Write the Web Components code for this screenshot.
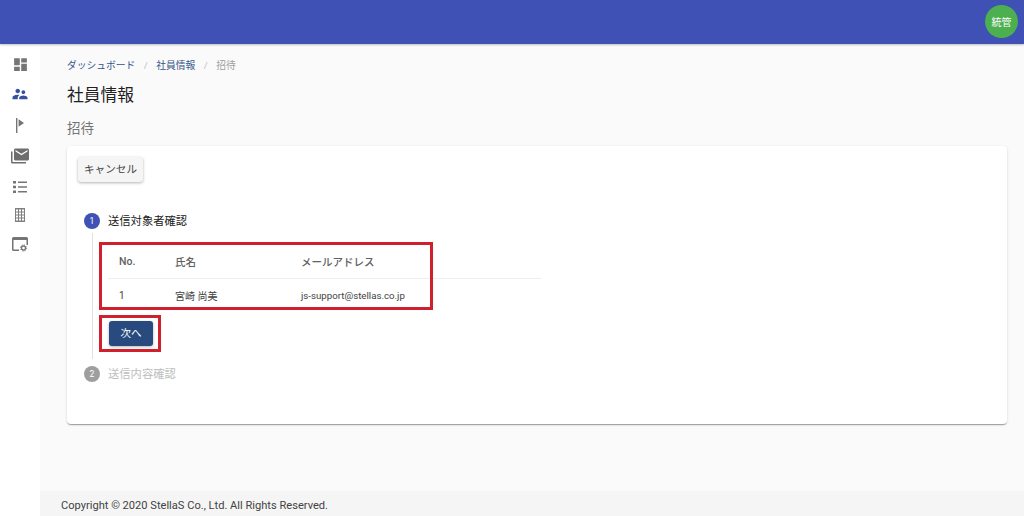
<!DOCTYPE html>
<html lang="ja">
<head>
<meta charset="utf-8">
<title>社員情報</title>
<style>
  html, body { margin: 0; height: 100%; }
  body { font-family: Roboto, "Noto Sans CJK JP", sans-serif; background: #fafafa; }
</style>
</head>
<body>
<app-shell>
  <top-bar slot="top" initials="統管"></top-bar>
  <side-nav slot="side"></side-nav>
  <bread-crumbs>
    <a>ダッシュボード</a>
    <a>社員情報</a>
    <span>招待</span>
  </bread-crumbs>
  <page-head title-text="社員情報" sub="招待"></page-head>
  <invite-card>
    <plain-button>キャンセル</plain-button>
    <step-item num="1" label="送信対象者確認" active>
      <mark-box>
        <staff-table></staff-table>
      </mark-box>
      <mark-box tight>
        <next-button>次へ</next-button>
      </mark-box>
    </step-item>
    <step-item num="2" label="送信内容確認"></step-item>
  </invite-card>
  <page-foot slot="foot">Copyright © 2020 StellaS Co., Ltd. All Rights Reserved.</page-foot>
</app-shell>

<script>
class AppShell extends HTMLElement {
  constructor() {
    super();
    this.attachShadow({mode: 'open'}).innerHTML = `
      <style>
        :host { display: grid; grid-template-columns: 40px 1fr; grid-template-rows: 44px 1fr 25px; height: 516px; overflow: hidden; }
        .top { grid-column: 1 / 3; }
        .side { grid-row: 2 / 4; background: #fff; }
        .main { padding: 0 17px 0 27px; min-width: 0; }
      </style>
      <div class="top"><slot name="top"></slot></div>
      <div class="side"><slot name="side"></slot></div>
      <div class="main"><slot></slot></div>
      <div><slot name="foot"></slot></div>`;
  }
}
customElements.define('app-shell', AppShell);

class TopBar extends HTMLElement {
  constructor() {
    super();
    this.attachShadow({mode: 'open'}).innerHTML = `
      <style>
        :host { display: flex; height: 44px; box-sizing: border-box; background: #3f51b5; justify-content: flex-end; align-items: center; padding: 0 6px 1px 0; box-shadow: 0 1px 2px rgba(0,0,0,.25); position: relative; z-index: 2; }
        .av { width: 33px; height: 33px; border-radius: 50%; background: #4caf50; color: #fff; font-size: 10px; display: flex; align-items: center; justify-content: center; }
      </style>
      <div class="av">${this.getAttribute('initials')}</div>`;
  }
}
customElements.define('top-bar', TopBar);

// sidebar icons, drawn in px so they land on the same pixels as the reference
const NAV_ICONS = [
  {h: 30, svg: '<svg viewBox="0 0 24 24" width="17" height="17" fill="#757575"><path d="M3 13h8V3H3v10zm0 8h8v-6H3v6zm10 0h8V11h-8v10zm0-18v6h8V3h-8z"/></svg>'},
  {h: 30, svg: '<svg viewBox="0 0 24 24" width="18" height="18" fill="#34509f"><path d="M16.5 12c1.38 0 2.49-1.12 2.49-2.5S17.88 7 16.5 7 14 8.12 14 9.5s1.12 2.5 2.5 2.5zM9 11c1.66 0 2.99-1.34 2.99-3S10.66 5 9 5 6 6.34 6 8s1.34 3 3 3zm7.5 3c-1.83 0-5.5.92-5.5 2.75V19h11v-2.25c0-1.83-3.67-2.75-5.5-2.75zM9 13c-2.33 0-7 1.17-7 3.5V19h7v-2.25c0-.85.33-2.34 2.37-3.47C10.5 13.1 9.66 13 9 13z"/></svg>'},
  {h: 32, svg: '<svg viewBox="0 0 8 15" width="8" height="15" fill="#757575"><path d="M0 0h1.4v15H0zM2.6 1.2L8 5 2.6 8.8z"/></svg>'},
  {h: 30, svg: '<svg viewBox="0 0 24 24" width="18" height="18" fill="#6e6e6e"><path d="M2 6H0v5h.01L0 20c0 1.1.9 2 2 2h18v-2H2V6zm20-4H6c-1.1 0-2 .9-2 2v12c0 1.1.9 2 2 2h16c1.1 0 2-.9 2-2V4c0-1.1-.9-2-2-2zm0 4l-8 5-8-5V4l8 5 8-5v2z"/></svg>'},
  {h: 32, svg: '<svg viewBox="0 0 14 12" width="14" height="12" fill="#757575"><path d="M0 0h3v2.4H0zM0 4.8h3v2.4H0zM0 9.6h3V12H0zM5 .5h9V2H5zM5 5.3h9v1.5H5zM5 10h9v1.5H5z"/></svg>'},
  {h: 24, svg: '<svg viewBox="0 0 10 14" width="10" height="14" fill="#808080"><path fill-rule="evenodd" d="M0 0h10v14H0zM1 1.5v2h2v-2zM4 1.5v2h2v-2zM7 1.5v2h2v-2zM1 4.5v2h2v-2zM4 4.5v2h2v-2zM7 4.5v2h2v-2zM1 7.5v2h2v-2zM4 7.5v2h2v-2zM7 7.5v2h2v-2zM1 10.5v2h2v-2zM4 10.5v2h2v-2zM7 10.5v2h2v-2z"/></svg>'},
  {h: 35, svg: '<svg viewBox="0 0 16 15" width="16" height="15" fill="#757575"><path d="M1.5 0h13A1.5 1.5 0 0 1 16 1.5V8h-1.500V3h-13v9.500H7V14H1.500A1.500 1.500 0 0 1 0 12.500v-11A1.500 1.500 0 0 1 1.500 0z"/><circle cx="11.500" cy="11" r="2" fill="none" stroke="#757575" stroke-width="1.300"/><circle cx="11.500" cy="11" r="3.100" fill="none" stroke="#757575" stroke-width="1" stroke-dasharray="1.200 1.230"/></svg>'}
];

class SideNav extends HTMLElement {
  constructor() {
    super();
    let html = '';
    for (var i = 0; i < NAV_ICONS.length; i++) {
      html += `<div class="it" style="height:${NAV_ICONS[i].h}px">${NAV_ICONS[i].svg}</div>`;
    }
    this.attachShadow({mode: 'open'}).innerHTML = `
      <style>
        :host { display: flex; flex-direction: column; padding-top: 5px; }
        .it { display: flex; align-items: center; justify-content: center; }
      </style>${html}`;
  }
}
customElements.define('side-nav', SideNav);

class BreadCrumbs extends HTMLElement {
  constructor() {
    super();
    this.attachShadow({mode: 'open'}).innerHTML = `
      <style>
        :host { display: block; height: 39px; padding-top: 16px; box-sizing: border-box; font-size: 9.75px; line-height: 12px; }
        nav { display: flex; gap: 8.5px; color: #9e9e9e; }
        ::slotted(a) { color: #34568b; }
        ::slotted(span) { color: #9e9e9e; }
        i { font-style: normal; color: #bdbdbd; }
      </style>
      <nav></nav>`;
    const nav = this.shadowRoot.querySelector('nav');
    var kids = Array.from(this.children);
    kids.forEach(function (k, n) {
      k.slot = 'c' + n;
      var s = document.createElement('slot');
      s.name = 'c' + n;
      nav.appendChild(s);
      if (n < kids.length - 1) {
        var sep = document.createElement('i');
        sep.textContent = '/';
        nav.appendChild(sep);
      }
    });
  }
}
customElements.define('bread-crumbs', BreadCrumbs);

class PageHead extends HTMLElement {
  constructor() {
    super();
    this.attachShadow({mode: 'open'}).innerHTML = `
      <style>
        :host { display: block; height: 63px; }
        h1 { margin: 0; font-size: 16.75px; font-weight: 400; line-height: 24px; color: #212121; }
        h2 { margin: 11px 0 0; font-size: 13.5px; font-weight: 400; line-height: 20px; color: #757575; }
      </style>
      <h1>${this.getAttribute('title-text')}</h1>
      <h2>${this.getAttribute('sub')}</h2>`;
  }
}
customElements.define('page-head', PageHead);

class InviteCard extends HTMLElement {
  constructor() {
    super();
    this.attachShadow({mode: 'open'}).innerHTML = `
      <style>
        :host { display: block; height: 278px; box-sizing: border-box; background: #fff; border-radius: 4px; padding: 11px; box-shadow: 0 2px 1px -1px rgba(0,0,0,.2), 0 1px 1px 0 rgba(0,0,0,.14), 0 1px 3px 0 rgba(0,0,0,.12); }
      </style>
      <slot></slot>`;
  }
}
customElements.define('invite-card', InviteCard);

class PlainButton extends HTMLElement {
  constructor() {
    super();
    this.attachShadow({mode: 'open'}).innerHTML = `
      <style>
        :host { display: flex; width: 65px; height: 25px; box-sizing: border-box; padding-bottom: 3px; margin-bottom: 31px; align-items: center; justify-content: center; background: #f5f5f5; color: #424242; font-size: 10.6px; border-radius: 3px; box-shadow: 0 1px 3px rgba(0,0,0,.3); }
      </style>
      <slot></slot>`;
  }
}
customElements.define('plain-button', PlainButton);

class StepItem extends HTMLElement {
  constructor() {
    super();
    const on = this.hasAttribute('active');
    this.attachShadow({mode: 'open'}).innerHTML = `
      <style>
        :host { display: block; padding-left: 6px; }
        .head { display: flex; align-items: center; gap: 8px; height: 16px; font-size: 11.3px; color: ${on ? '#212121' : '#bdbdbd'}; }
        .lab { padding-bottom: 3px; }
        .num { width: 16px; height: 16px; border-radius: 50%; background: ${on ? '#3f51b5' : '#9e9e9e'}; color: #fff; font-size: 8.5px; display: flex; align-items: center; justify-content: center; }
        .body { margin: 4px 0 7px 8px; padding: 12px 0 0 15px; border-left: 1px solid #e0e0e0; height: 126px; box-sizing: border-box; display: ${on ? 'block' : 'none'}; }
      </style>
      <div class="head"><span class="num">${this.getAttribute('num')}</span><span class="lab">${this.getAttribute('label')}</span></div>
      <div class="body"><slot></slot></div>`;
  }
}
customElements.define('step-item', StepItem);

class MarkBox extends HTMLElement {
  constructor() {
    super();
    const tight = this.hasAttribute('tight');
    this.attachShadow({mode: 'open'}).innerHTML = `
      <style>
        :host { display: block; position: relative; margin-bottom: ${tight ? 0 : 8}px; }
        .red { position: absolute; border: 3px solid #d0202e; box-sizing: border-box; pointer-events: none; left: -9px; ${tight ? 'top: -6px; bottom: -6px; width: 62px;' : 'top: -3px; bottom: 3px; width: 334px;'} }
      </style>
      <slot></slot><div class="red"></div>`;
  }
}
customElements.define('mark-box', MarkBox);

class StaffTable extends HTMLElement {
  constructor() {
    super();
    this.attachShadow({mode: 'open'}).innerHTML = `
      <style>
        :host { display: block; width: 433px; font-size: 10px; color: #424242; }
        .r { display: grid; grid-template-columns: 67px 126px 1fr; align-items: center; height: 34px; box-sizing: border-box; }
        .r > span:first-child { padding-left: 11px; }
        .h { font-weight: 500; color: #616161; border-bottom: 1px solid #eeeeee; font-size: 10.5px; }
        .b > span { padding-bottom: 1px; }
        .mail { font-size: 9.7px; }
      </style>
      <div class="r h"><span>No.</span><span>氏名</span><span>メールアドレス</span></div>
      <div class="r b"><span>1</span><span>宮崎 尚美</span><span class="mail">js-support@stellas.co.jp</span></div>`;
  }
}
customElements.define('staff-table', StaffTable);

class NextButton extends HTMLElement {
  constructor() {
    super();
    this.attachShadow({mode: 'open'}).innerHTML = `
      <style>
        :host { display: flex; width: 44px; height: 25px; box-sizing: border-box; padding-bottom: 2px; margin-left: 1px; align-items: center; justify-content: center; background: #284a7e; color: #fff; font-size: 10.5px; border-radius: 3px; box-shadow: 0 1px 3px rgba(0,0,0,.3); }
      </style>
      <slot></slot>`;
  }
}
customElements.define('next-button', NextButton);

class PageFoot extends HTMLElement {
  constructor() {
    super();
    this.attachShadow({mode: 'open'}).innerHTML = `
      <style>
        :host { display: flex; height: 25px; box-sizing: border-box; padding: 3px 0 0 21px; align-items: center; background: #f5f5f5; color: #424242; font-size: 11.1px; }
      </style>
      <slot></slot>`;
  }
}
customElements.define('page-foot', PageFoot);
</script>
</body>
</html>
